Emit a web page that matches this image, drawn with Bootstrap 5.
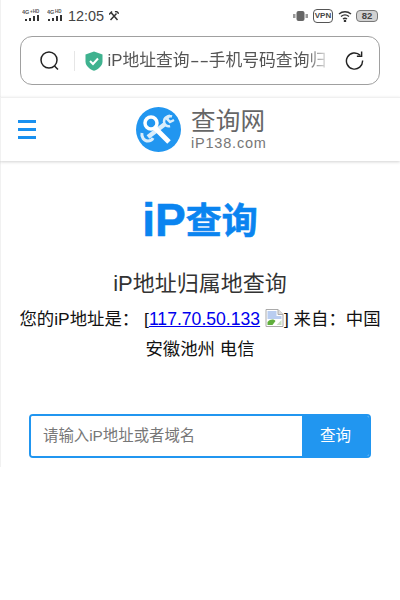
<!DOCTYPE html>
<html lang="zh">
<head>
  <meta charset="UTF-8">
  <meta name="viewport" content="width=device-width, initial-scale=1.0">
  <title>iP查询</title>
  <link href="https://cdn.jsdelivr.net/npm/bootstrap@5.3.0/dist/css/bootstrap.min.css" rel="stylesheet">
  <style>
    body {
      width: 400px;
      height: 600px;
      overflow: hidden;
      background: #fff;
      color: #222;
      font-family: "Liberation Sans", "Noto Sans CJK SC", sans-serif;
    }

    .page-top { height: 467px; box-shadow: inset 1px 0 #f1f1f1; }

    /* status bar */
    .status-bar {
      height: 28px;
      padding: 3px 22px 0 22px;
      color: #444;
    }
    .status-time { font-size: 14.4px; line-height: 18px; margin: 0 5px 0 3px; }
    .vpn-tag {
      width: 20px;
      height: 14px;
      margin: 0 5px;
      font-size: 8px;
      font-weight: 700;
      line-height: 12px;
      text-align: center;
      border: 1px solid #555;
      border-radius: 4px;
    }
    .battery-tag {
      width: 22px;
      height: 12px;
      margin-left: 4px;
      font-size: 9.5px;
      font-weight: 700;
      line-height: 10px;
      text-align: center;
      background: #d2d2d2;
      border: 1px solid #777;
      border-radius: 4px;
    }

    /* address bar */
    .browser-bar {
      height: 69px;
      padding: 8px 20px 0;
    }
    .address-box {
      height: 49px;
      border: 1.5px solid #a0a0a0;
      border-radius: 12px;
      padding: 0 15.5px 0 18.5px;
    }
    .address-sep { width: 1px; height: 20px; background: #e6e6e6; margin: 0 10px 0 15px; }
    .address-text {
      width: 224px;
      margin-left: 5px;
      font-size: 16.8px;
      color: #555;
      white-space: nowrap;
      overflow: hidden;
      -webkit-mask-image: linear-gradient(to right, #000 88%, transparent);
      mask-image: linear-gradient(to right, #000 88%, transparent);
    }
    .address-dash { display: inline-block; margin: 0 4px; transform: scaleX(1.7); }

    /* site header */
    .site-header {
      height: 64px;
      border-top: 1px solid #f0f0f0;
      box-shadow: 0 1px 3px rgba(0, 0, 0, .18);
      padding-left: 18px;
    }
    .menu-lines { width: 18px; }
    .menu-lines span { display: block; height: 3px; background: #1890f0; margin-bottom: 5px; }
    .menu-lines span:last-child { margin-bottom: 0; }
    .logo-wrap { margin-left: 100px; }
    .logo-text { margin-left: 10px; }
    .logo-name { font-size: 24.5px; line-height: 27px; color: #666; letter-spacing: .3px; }
    .logo-url { font-size: 14.5px; line-height: 16px; color: #777; letter-spacing: .8px; }

    /* main */
    .page-title {
      font-size: 36px;
      font-weight: 700;
      line-height: 46px;
      height: 46px;
      color: #0a84f0;
      margin: 36px 0 0;
      -webkit-text-stroke: .6px #0a84f0;
    }
    .title-latin { font-size: 46px; }
    .title-cjk { vertical-align: 2px; }
    .page-sub { font-size: 22px; line-height: 30px; height: 30px; margin: 26px 0 0; color: #333; font-weight: 400; }
    .ip-info { font-size: 17.4px; line-height: 30px; margin: 5px 0 0; color: #111; }
    .ip-info a { color: #00e; font-size: 17.6px; }
    .broken-img { vertical-align: -2px; }

    .search-box {
      margin: 50px 29px 0;
      height: 44px;
      border: 2px solid #2196f0;
      border-radius: 4px;
      overflow: hidden;
    }
    .search-box .form-control {
      border: 0;
      border-radius: 0;
      box-shadow: none;
      padding: 0 12px;
      font-size: 15.4px;
      color: #777;
    }
    .search-box .form-control::placeholder { color: #777; opacity: 1; }
    .search-box .btn {
      width: 67px;
      flex: none;
      border: 0;
      border-radius: 0;
      background: #2196f0;
      color: #fff;
      font-size: 15.5px;
      padding: 0;
    }
  </style>
</head>
<body>
  <div class="page-top">
  <div class="status-bar d-flex align-items-center">
    <svg width="21" height="14" viewBox="0 0 21 14"><text x="0" y="5" font-size="5.500" font-weight="700" font-family="Liberation Sans" fill="#555">4G</text><text x="8" y="4" font-size="4.500" font-weight="700" font-family="Liberation Sans" fill="#555">+HD</text><path d="M3 12v-2h2v2zM7 12V9h2v3zM11 12V7h2v5zM15 12V6h2v6z" fill="#333"/></svg>
    <svg class="ms-1" width="18" height="14" viewBox="0 0 18 14"><text x="0" y="5" font-size="5.500" font-weight="700" font-family="Liberation Sans" fill="#555">4G</text><text x="8" y="4" font-size="4.500" font-weight="700" font-family="Liberation Sans" fill="#555">HD</text><path d="M1 12v-2h2v2zM5 12V9h2v3zM9 12V7h2v5zM13 12V6h2v6z" fill="#333"/></svg>
    <span class="status-time">12:05</span>
    <svg width="10" height="10" viewBox="0 0 10 10" fill="none" stroke="#333" stroke-width="1.500"><path d="M1.500 9 7.500 2.500M2 1.500 8.500 9"/><path d="M0 3.500 3 .5M6 .8c1.500-.6 3 .4 3.500 2"/></svg>
    <div class="ms-auto d-flex align-items-center">
      <svg width="15" height="12" viewBox="0 0 15 12"><rect x="3.500" y="1" width="8" height="10" rx="2" fill="#666"/><rect x="0" y="4" width="2.500" height="4" fill="#999"/><rect x="12.500" y="4" width="2.500" height="4" fill="#999"/></svg>
      <span class="vpn-tag">VPN</span>
      <svg width="14" height="12" viewBox="0 0 14 12" fill="none" stroke="#333" stroke-width="1.400"><path d="M1 4c3.500-3 8.500-3 12 0M3 6.500c2.500-2 5.500-2 8 0M5 9c1.200-1 2.800-1 4 0"/><circle cx="7" cy="11" r=".6" fill="#333"/></svg>
      <span class="battery-tag">82</span>
    </div>
  </div>

  <div class="browser-bar">
    <div class="address-box d-flex align-items-center">
      <svg class="flex-shrink-0" width="19" height="20" viewBox="0 0 19 20" fill="none" stroke="#222" stroke-width="1.500"><circle cx="9" cy="9" r="8"/><path d="M14.500 15 18 18.500"/></svg>
      <span class="address-sep"></span>
      <svg class="flex-shrink-0" width="18" height="20" viewBox="0 0 18 20"><path d="M9 .5 17.500 3.500v7C17.500 15 13 18.500 9 19.800 5 18.500.5 15 .5 10.500v-7z" fill="#3fb28f"/><path d="M5 10l3 3 5-5.500" fill="none" stroke="#fff" stroke-width="2"/></svg>
      <div class="address-text">iP地址查询<span class="address-dash">--</span>手机号码查询归</div>
      <svg class="ms-auto flex-shrink-0" width="19" height="19" viewBox="0 0 20 20" fill="none" stroke="#222" stroke-width="1.500"><path d="M16 4.500A8.500 8.500 0 1 0 18.500 10"/><path d="M17.500 .5v5h-5"/></svg>
    </div>
  </div>

  <header class="site-header d-flex align-items-center">
    <div class="menu-lines"><span></span><span></span><span></span></div>
    <div class="logo-wrap d-flex align-items-center">
      <svg width="45" height="45" viewBox="0 0 45 45">
        <circle cx="22.500" cy="22.500" r="22.500" fill="#2196f0"/>
        <g fill="none" stroke="#d9edfb">
          <path d="M29 17 12 30" stroke-width="4.500"/>
          <path d="M36 9.500c-4-1.500-8 1-8 5 0 3 3 5.500 6 4.500M34 8l-3 4 3 3 4-2" stroke-width="2.500"/>
          <path d="M6 26c-1 4 2 8 6 8 2 0 4-1 5-3" stroke-width="3"/>
        </g>
        <g fill="none" stroke="#fff">
          <circle cx="15" cy="16" r="6" stroke-width="3.500"/>
          <path d="M19 21 33 35" stroke-width="5"/>
        </g>
      </svg>
      <div class="logo-text">
        <div class="logo-name">查询网</div>
        <div class="logo-url">iP138.com</div>
      </div>
    </div>
  </header>

  <main class="text-center">
    <h1 class="page-title"><span class="title-latin">iP</span><span class="title-cjk">查询</span></h1>
    <h2 class="page-sub">iP地址归属地查询</h2>
    <p class="ip-info mb-0">您的iP地址是： [<a href="#">117.70.50.133</a> <svg class="broken-img" width="19" height="18" viewBox="0 0 18 18"><path d="M.5.5h12l5 5v12H.5z" fill="#fff" stroke="#aaa"/><path d="M12.500.5v5h5" fill="#ddd" stroke="#aaa"/><path d="M2 2h9v5h5v3H2z" fill="#b9cdf0"/><path d="M2 16v-3c3-3 6-3 8-1l-3 4z" fill="#5fae3c"/><path d="M11 16l5-5v5z" fill="#c9dfc0"/></svg>] 来自：中国<br>安徽池州 电信</p>

    <form class="search-box d-flex" onsubmit="return false">
      <input class="form-control" type="text" placeholder="请输入iP地址或者域名">
      <button class="btn" type="submit">查询</button>
    </form>
  </main>
  </div>

  <script src="https://cdn.jsdelivr.net/npm/bootstrap@5.3.0/dist/js/bootstrap.bundle.min.js"></script>
</body>
</html>
